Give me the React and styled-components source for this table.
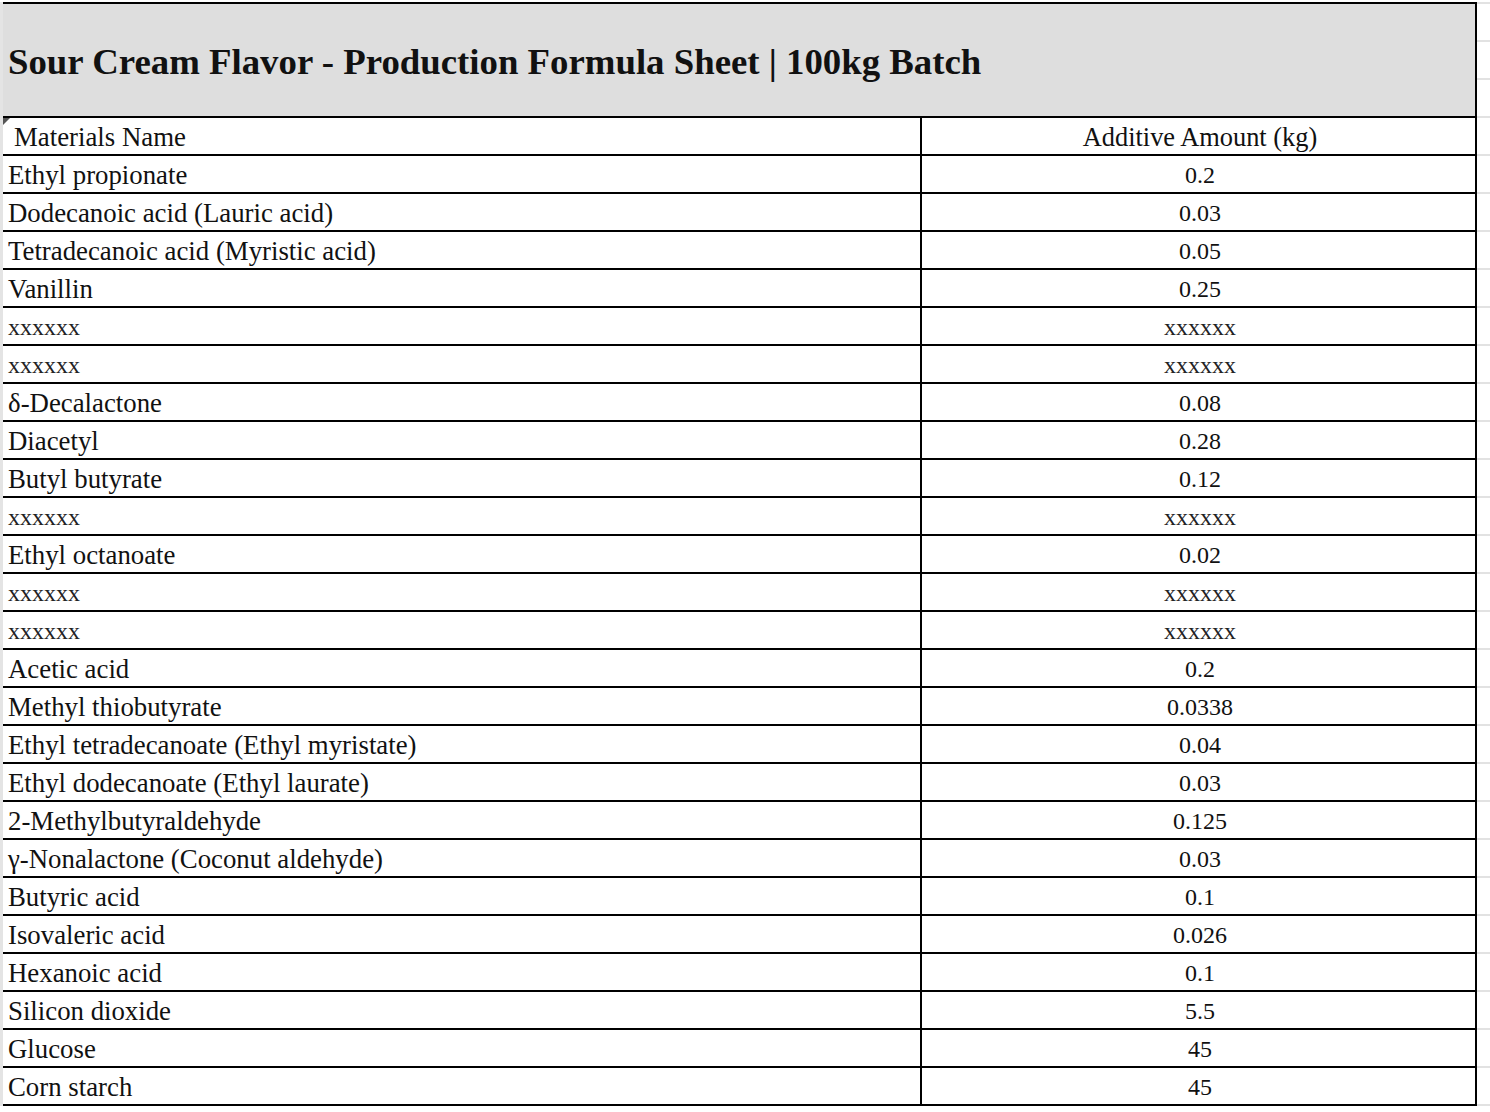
import React from "react";
import styled, { createGlobalStyle } from "styled-components";

const GlobalStyle = createGlobalStyle`
  html, body { margin: 0; padding: 0; background: #ffffff; }
  body { font-family: "Liberation Serif", "Times New Roman", serif; color: #111; }
`;

const Page = styled.div`
  display: flex;
  align-items: flex-start;
  padding-top: 2px;
  width: 1490px;
  box-sizing: border-box;
`;

const Table = styled.div`
  display: flex;
  flex-direction: column;
  width: 1477px;
  border-left: 3px solid #e4e4e4;
  box-sizing: border-box;
`;

const Gutter = styled.div`
  flex: 1;
  align-self: stretch;
  background: repeating-linear-gradient(
    to bottom,
    #e2e2e2 0 2px,
    transparent 2px 38px
  );
`;

const TitleRow = styled.div`
  height: 116px;
  display: flex;
  align-items: center;
  box-sizing: border-box;
  background: #dedede;
  border-top: 2px solid #000;
  border-bottom: 2px solid #000;
  border-right: 2px solid #000;
  padding: 4px 0 0 5px;
`;

const Title = styled.h1`
  margin: 0;
  font-family: "Liberation Serif", "Times New Roman", serif;
  font-weight: 700;
  font-size: 36.8px;
  line-height: 1;
  color: #111;
  white-space: nowrap;
`;

const Row = styled.div`
  position: relative;
  display: grid;
  grid-template-columns: 919px 1fr;
  height: 38px;
  box-sizing: border-box;
  border-bottom: 2px solid #000;
  border-right: 2px solid #000;
`;

const NameCell = styled.div`
  display: flex;
  align-items: flex-end;
  border-right: 2px solid #000;
  padding: 0 0 ${(p) => (p.$masked ? "5px" : "3px")} ${(p) => (p.$indent ? "11px" : "5px")};
  font-size: ${(p) => (p.$masked ? "24px" : "26.8px")};
  line-height: ${(p) => (p.$masked ? "24px" : "27px")};
  color: ${(p) => (p.$masked ? "#222" : "#111")};
  white-space: nowrap;
  overflow: hidden;
`;

const ValueCell = styled.div`
  display: flex;
  align-items: flex-end;
  justify-content: center;
  padding-left: 3px;
  padding-bottom: ${(p) => (p.$masked ? "5px" : p.$header ? "3px" : "5px")};
  font-size: ${(p) => (p.$header ? "26.4px" : "24px")};
  line-height: ${(p) => (p.$header ? "27px" : "24px")};
  color: ${(p) => (p.$masked ? "#222" : "#111")};
  white-space: nowrap;
`;

const CornerMark = styled.span`
  position: absolute;
  left: 0;
  top: 0;
  width: 0;
  height: 0;
  border-top: 7px solid #555;
  border-right: 7px solid transparent;
`;

const rows = [
  ["Ethyl propionate", "0.2"],
  ["Dodecanoic acid (Lauric acid)", "0.03"],
  ["Tetradecanoic acid (Myristic acid)", "0.05"],
  ["Vanillin", "0.25"],
  ["xxxxxx", "xxxxxx"],
  ["xxxxxx", "xxxxxx"],
  ["δ-Decalactone", "0.08"],
  ["Diacetyl", "0.28"],
  ["Butyl butyrate", "0.12"],
  ["xxxxxx", "xxxxxx"],
  ["Ethyl octanoate", "0.02"],
  ["xxxxxx", "xxxxxx"],
  ["xxxxxx", "xxxxxx"],
  ["Acetic acid", "0.2"],
  ["Methyl thiobutyrate", "0.0338"],
  ["Ethyl tetradecanoate (Ethyl myristate)", "0.04"],
  ["Ethyl dodecanoate (Ethyl laurate)", "0.03"],
  ["2-Methylbutyraldehyde", "0.125"],
  ["γ-Nonalactone (Coconut aldehyde)", "0.03"],
  ["Butyric acid", "0.1"],
  ["Isovaleric acid", "0.026"],
  ["Hexanoic acid", "0.1"],
  ["Silicon dioxide", "5.5"],
  ["Glucose", "45"],
  ["Corn starch", "45"],
];

export default function App() {
  return (
    <>
      <GlobalStyle />
      <Page>
        <Table>
          <TitleRow>
            <Title>Sour Cream Flavor - Production Formula Sheet | 100kg Batch</Title>
          </TitleRow>
          <Row>
            <CornerMark />
            <NameCell $indent>Materials Name</NameCell>
            <ValueCell $header>Additive Amount (kg)</ValueCell>
          </Row>
          {rows.map(([name, value], i) => {
            const masked = name === "xxxxxx";
            return (
              <Row key={i}>
                <NameCell $masked={masked}>{name}</NameCell>
                <ValueCell $masked={masked}>{value}</ValueCell>
              </Row>
            );
          })}
        </Table>
        <Gutter />
      </Page>
    </>
  );
}
